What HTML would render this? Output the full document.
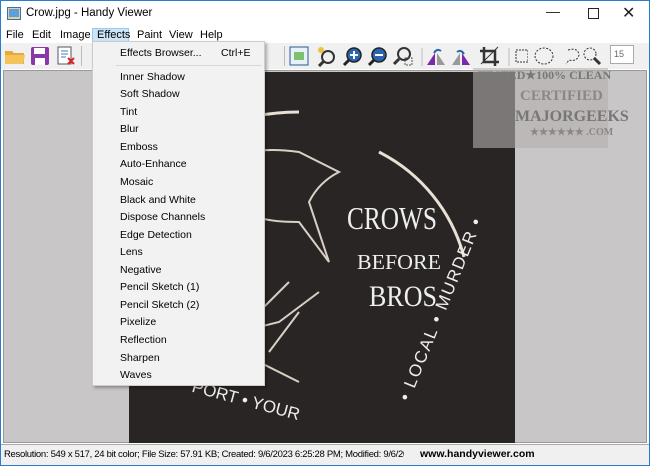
<!DOCTYPE html><html><head><style>
body{margin:0;width:650px;height:466px;overflow:hidden;background:#fff;font-family:"Liberation Sans",sans-serif;font-size:11px;position:relative}
.a{position:absolute}
.dd div{position:absolute;left:28px;font-size:10.5px;color:#000;white-space:nowrap}
</style></head><body>
<div class="a" style="left:0;top:0;width:650px;height:466px;border:1px solid #2b7bd0;box-sizing:border-box"></div>
<svg class="a" style="left:7px;top:7px" width="14" height="13"><rect x="0.5" y="0.5" width="13" height="12" fill="#e8d090" stroke="#3a6fb0"/><rect x="2" y="2" width="10" height="8" fill="#5aa0e0"/></svg>
<div class="a" style="left:26px;top:7px;font-size:11.5px">Crow.jpg - Handy Viewer</div>
<div class="a" style="left:546px;top:3px;font-size:14px;color:#222">&#8212;</div>
<div class="a" style="left:588px;top:8px;width:9px;height:9px;border:1px solid #222"></div>
<div class="a" style="left:622px;top:3px;font-size:16px;color:#222">✕</div>
<div class="a" style="left:92px;top:28px;width:37px;height:15px;background:#cce4f7;border:1px solid #99c9ef;box-sizing:border-box"></div>
<div class="a" style="left:6px;top:29px">File</div>
<div class="a" style="left:32px;top:29px">Edit</div>
<div class="a" style="left:60px;top:29px">Image</div>
<div class="a" style="left:97px;top:29px">Effects</div>
<div class="a" style="left:137px;top:29px">Paint</div>
<div class="a" style="left:169px;top:29px">View</div>
<div class="a" style="left:200px;top:29px">Help</div>
<div class="a" style="left:1px;top:43px;width:648px;height:26px;background:#f0f0f0"></div>
<svg class="a" style="left:4px;top:46px" width="22" height="20"><path d="M1 5h7l2 2h10v11H1z" fill="#e8a93a"/><path d="M1 9h20l-2 9H1z" fill="#f6c35a"/></svg>
<svg class="a" style="left:30px;top:46px" width="20" height="20"><rect x="1" y="1" width="18" height="18" rx="2" fill="#8a3aa8"/><rect x="4" y="2" width="11" height="6" fill="#fff"/><rect x="5" y="12" width="10" height="7" fill="#fff"/></svg>
<svg class="a" style="left:56px;top:46px" width="20" height="20"><rect x="2" y="1" width="13" height="17" fill="#fff" stroke="#556"/><path d="M5 5h7M5 8h7M5 11h5" stroke="#4a7ab8"/><path d="M12 12l6 6M18 12l-6 6" stroke="#d22" stroke-width="2"/></svg>
<div class="a" style="left:81px;top:46px;width:1px;height:20px;background:#bbb"></div>
<div class="a" style="left:284px;top:46px;width:1px;height:20px;background:#bbb"></div>
<svg class="a" style="left:288px;top:45px" width="240" height="22">
<rect x="2" y="2" width="18" height="18" fill="#e8f0f8" stroke="#2a5a90"/><rect x="6" y="7" width="10" height="8" fill="#7cc070"/>
<circle cx="40" cy="12" r="6" fill="none" stroke="#333" stroke-width="2"/><path d="M36 16l-5 5" stroke="#333" stroke-width="3"/><circle cx="33" cy="5" r="3" fill="#f0c040"/>
<circle cx="66" cy="10" r="7" fill="#2a66b0" stroke="#222" stroke-width="1.5"/><path d="M62 10h8M66 6v8" stroke="#fff" stroke-width="2"/><path d="M61 15l-5 5" stroke="#222" stroke-width="3"/>
<circle cx="91" cy="10" r="7" fill="#2a66b0" stroke="#222" stroke-width="1.5"/><path d="M87 10h8" stroke="#fff" stroke-width="2"/><path d="M86 15l-5 5" stroke="#222" stroke-width="3"/>
<circle cx="116" cy="9" r="6" fill="none" stroke="#333" stroke-width="2"/><path d="M111 14l-5 5" stroke="#333" stroke-width="3"/><rect x="117" y="13" width="7" height="7" fill="none" stroke="#555" stroke-dasharray="2 1"/>
<path d="M134 3v18" stroke="#bbb"/>
<path d="M139 20l8-12v12z" fill="#7a2aa8"/><path d="M149 20v-12l8 12z" fill="#999"/><path d="M146 8q3-5 7-2" stroke="#2a66b0" fill="none" stroke-width="2"/>
<path d="M164 20l8-12v12z" fill="#999"/><path d="M174 20v-12l8 12z" fill="#7a2aa8"/><path d="M169 7q4-3 7 2" stroke="#2a66b0" fill="none" stroke-width="2"/>
<path d="M196 2v15h15M192 6h15v15" stroke="#333" stroke-width="2.5" fill="none"/><path d="M193 19l17-17" stroke="#333"/>
<path d="M221 3v18" stroke="#bbb"/>
<rect x="228" y="5" width="12" height="12" fill="none" stroke="#333" stroke-dasharray="2 1"/>
</svg>
<svg class="a" style="left:530px;top:45px" width="80" height="22"><ellipse cx="14" cy="11" rx="9" ry="8" fill="none" stroke="#333" stroke-dasharray="2 1.5"/><path d="M38 5q10-3 11 5q-2 7-10 5l-3 4" fill="none" stroke="#333" stroke-dasharray="2 1.5"/><circle cx="60" cy="9" r="6" fill="none" stroke="#333" stroke-dasharray="2 1.5"/><path d="M64 13l6 6" stroke="#333" stroke-width="3"/></svg>
<div class="a" style="left:610px;top:45px;width:24px;height:19px;background:#fff;border:1px solid #aaa;font-size:9px;color:#666;padding:3px 0 0 3px;box-sizing:border-box">15</div>
<div class="a" style="left:3px;top:70px;width:644px;height:373px;background:#c8c6c6;border:1px solid #999;box-sizing:border-box"></div>
<svg class="a" style="left:129px;top:72px" width="386" height="371"><rect width="386" height="371" fill="#2a2525"/>
<path d="M250 80A165 165 0 0 1 335 185" fill="none" stroke="#e8e0d4" stroke-width="3"/>
<path d="M40 80q60-40 130-40" fill="none" stroke="#e8e0d4" stroke-width="3"/>
<path d="M60 110q40-40 110-30l40 20q-20 10-30 30l20 60-30-40q-40 0-50-10" fill="none" stroke="#d8d0c4" stroke-width="2"/>
<path d="M70 260q40-40 60-20l30-30M110 260l40-10 40-30M140 280l30-40M50 300l60-20 60 30" fill="none" stroke="#d8d0c4" stroke-width="2"/>
<text x="218" y="157" font-size="32" fill="#eee" font-family="Liberation Serif" textLength="90" lengthAdjust="spacingAndGlyphs">CROWS</text>
<text x="228" y="197" font-size="21" fill="#eee" font-family="Liberation Serif" textLength="84" lengthAdjust="spacingAndGlyphs">BEFORE</text>
<text x="240" y="234" font-size="30" fill="#eee" font-family="Liberation Serif" textLength="68" lengthAdjust="spacingAndGlyphs">BROS</text>
<text x="60" y="335" font-size="17" fill="#eee" font-family="Liberation Sans" transform="rotate(15 120 335)">PORT • YOUR</text>
<text x="280" y="330" font-size="17" fill="#eee" font-family="Liberation Sans" textLength="195" lengthAdjust="spacing" transform="rotate(-68 280 330)">• LOCAL • MURDER •</text>
</svg>
<div class="a" style="left:473px;top:68px;width:135px;height:80px;background:rgba(180,175,175,.6)"></div>
<div class="a" style="left:478px;top:68px;font:bold 12px 'Liberation Serif';color:#777">TESTED★100% CLEAN</div>
<div class="a" style="left:520px;top:88px;font:bold 15px 'Liberation Serif';color:#888">CERTIFIED</div>
<div class="a" style="left:515px;top:108px;font:bold 16px 'Liberation Serif';color:#777">MAJORGEEKS</div>
<div class="a" style="left:530px;top:127px;font:bold 10px 'Liberation Serif';color:#888">★★★★★★ .COM</div>
<div class="a" style="left:92px;top:41px;width:173px;height:345px;background:#f2f2f2;border:1px solid #ccc;box-sizing:border-box;box-shadow:2px 2px 3px rgba(0,0,0,.3)"></div>
<div class="a" style="left:116px;top:65px;width:146px;height:1px;background:#d8d8d8"></div>
<div class="a dd" style="left:92px;top:0;width:173px">
<div style="top:47px">Effects Browser...</div><div style="top:47px;left:129px">Ctrl+E</div>
<div style="top:71px">Inner Shadow</div><div style="top:88px">Soft Shadow</div><div style="top:106px">Tint</div><div style="top:123px">Blur</div><div style="top:141px">Emboss</div><div style="top:158px">Auto-Enhance</div><div style="top:176px">Mosaic</div><div style="top:194px">Black and White</div><div style="top:211px">Dispose Channels</div><div style="top:229px">Edge Detection</div><div style="top:246px">Lens</div><div style="top:264px">Negative</div><div style="top:281px">Pencil Sketch (1)</div><div style="top:299px">Pencil Sketch (2)</div><div style="top:316px">Pixelize</div><div style="top:334px">Reflection</div><div style="top:352px">Sharpen</div><div style="top:369px">Waves</div>
</div>
<div class="a" style="left:1px;top:444px;width:648px;height:20px;background:#f0f0f0;border-top:1px solid #aaa"></div>
<div class="a" style="left:4px;top:449px;font-size:9.5px;letter-spacing:-0.3px;white-space:nowrap;width:400px;overflow:hidden">Resolution: 549 x 517, 24 bit color; File Size: 57.91 KB; Created: 9/6/2023 6:25:28 PM; Modified: 9/6/2023 6:25:28 PM; Zoom: 8</div>
<div class="a" style="left:420px;top:448px;font-size:10.5px;font-weight:bold">www.handyviewer.com</div>
</body></html>
